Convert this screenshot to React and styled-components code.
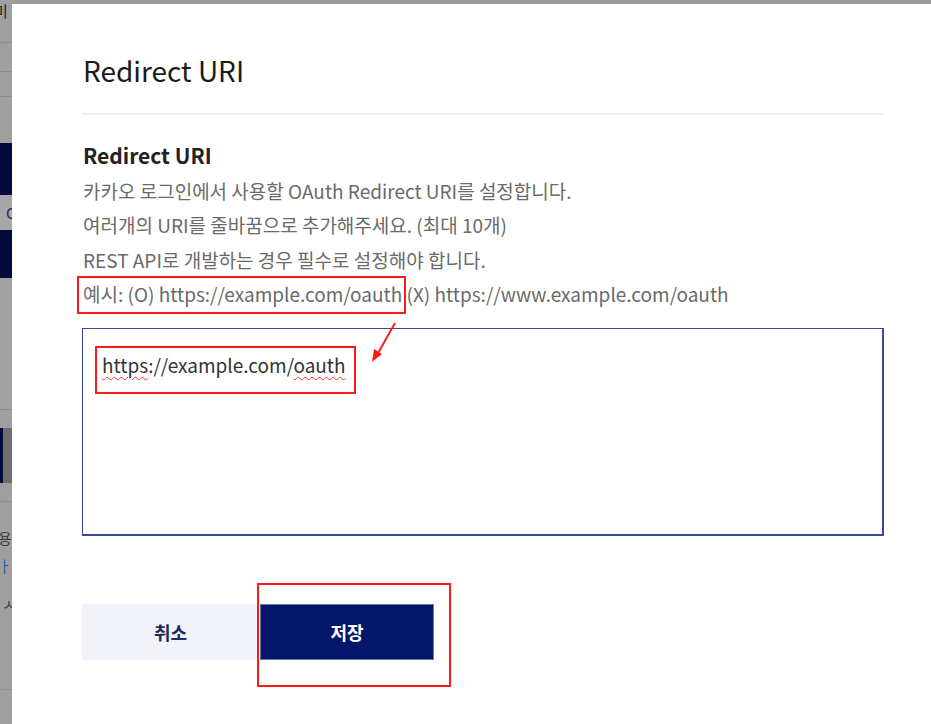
import React from 'react';
import styled, { createGlobalStyle } from 'styled-components';

const GlobalStyle = createGlobalStyle`
    html, body {
        margin: 0;
        padding: 0;
        overflow: hidden;
    }
    body {
        font-family: 'Noto Sans CJK KR', 'Noto Sans', sans-serif;
        background: #9d9d9d;
    }
    * {
        box-sizing: border-box;
    }
`;

const Screen = styled.div`
    display: grid;
    grid-template-columns: 12px 1fr;
    grid-template-rows: 4px 1fr;
    width: 100vw;
    height: 100vh;
    background: #9d9d9d;
`;

const PageEdge = styled.div`
    grid-row: 1 / 3;
    grid-column: 1;
    display: flex;
    flex-direction: column;
    overflow: hidden;
    background: #9f9f9f;
`;

const EdgeBlock = styled.div`
    height: ${(p) => p.h}px;
    flex-shrink: 0;
    background: ${(p) => p.bg || 'transparent'};
    border-bottom: ${(p) => (p.line ? '1px solid #8e8e8e' : 'none')};
    display: flex;
    align-items: center;
    font-size: 15px;
    color: ${(p) => p.ink || '#3a3a3a'};
    white-space: nowrap;
    line-height: 1;
`;

const SplitBlock = styled.div`
    height: ${(p) => p.h}px;
    flex-shrink: 0;
    display: grid;
    grid-template-columns: 3px 1fr;
    span:first-child {
        background: #030b3d;
    }
    span:last-child {
        background: #6c6c6c;
    }
`;

const TopEdge = styled.div`
    grid-row: 1;
    grid-column: 2;
    background: #9b9b9b;
`;

const Modal = styled.div`
    grid-row: 2;
    grid-column: 2;
    position: relative;
    background: #fff;
    padding: 47px 47px 0 70px;
    display: flex;
    flex-direction: column;
`;

const Title = styled.h2`
    margin: 0;
    font-size: 28px;
    font-weight: 400;
    line-height: 38px;
    color: #1b1b1b;
    padding-left: 1px;
`;

const Divider = styled.hr`
    margin: 24px 0 0;
    border: none;
    height: 2px;
    background: #efefef;
`;

const Section = styled.section`
    margin-top: 26px;
    display: flex;
    flex-direction: column;
`;

const SubTitle = styled.h3`
    margin: 0;
    font-size: 21px;
    font-weight: 700;
    line-height: 28px;
    color: #222;
    padding-left: 1px;
`;

const Description = styled.div`
    margin-top: 5px;
    font-size: 19px;
    line-height: 34.4px;
    color: #6a6a6a;
    padding-left: 1px;
    p {
        margin: 0;
        white-space: nowrap;
    }
`;

const Marked = styled.span`
    position: relative;
    display: inline-block;
    &::after {
        content: '';
        position: absolute;
        top: -1px;
        bottom: -2px;
        left: -6px;
        right: -4px;
        border: 2px solid #ff1a1a;
        pointer-events: none;
    }
`;

const UriBox = styled.div`
    margin-top: 16px;
    height: 208px;
    border: 1px solid #3a4896;
    border-right-width: 2px;
    border-bottom-width: 2px;
    padding: 22px 19px;
    font-size: 19px;
    line-height: 28px;
    color: #333;
`;

const UriLine = styled.span`
    position: relative;
    display: inline-block;
    &::after {
        content: '';
        position: absolute;
        top: -5px;
        bottom: -15px;
        left: -7px;
        right: -10px;
        border: 2px solid #ff1a1a;
        pointer-events: none;
    }
`;

const Misspelled = styled.span`
    text-decoration: underline wavy #ff3030;
    text-decoration-thickness: 1px;
    text-underline-offset: 3px;
`;

const Arrow = styled.svg`
    position: absolute;
    left: 354px;
    top: 316px;
    width: 40px;
    height: 42px;
    overflow: visible;
`;

const Actions = styled.div`
    margin-top: 68px;
    display: flex;
    gap: 1px;
`;

const Button = styled.button`
    position: relative;
    width: ${(p) => p.w}px;
    height: 56px;
    border: ${(p) => (p.primary ? '1px solid #6b76b4' : 'none')};
    background: ${(p) => (p.primary ? '#05166b' : '#f2f3f8')};
    color: ${(p) => (p.primary ? '#fff' : '#1e2b5c')};
    font-family: inherit;
    font-size: 18px;
    font-weight: 700;
    cursor: pointer;
    ${(p) =>
        p.marked &&
        `
        &::after {
            content: '';
            position: absolute;
            top: -22px;
            bottom: -28px;
            left: -4px;
            right: -18px;
            border: 2px solid #ff1a1a;
            pointer-events: none;
        }
    `}
`;

const App = () => {
    return (
        <>
            <GlobalStyle />
            <Screen>
                <PageEdge>
                    <EdgeBlock h={20} ink="#1a1a1a">
                        <span style={{ marginLeft: -6 }}>미</span>
                    </EdgeBlock>
                    <EdgeBlock h={23} line />
                    <EdgeBlock h={29} line />
                    <EdgeBlock h={25} line />
                    <EdgeBlock h={46} />
                    <EdgeBlock h={52} bg="#030b3d" />
                    <EdgeBlock h={35} bg="#a6a6a6" ink="#14206a">
                        <span style={{ marginLeft: 6 }}>C</span>
                    </EdgeBlock>
                    <EdgeBlock h={48} bg="#030b3d" />
                    <EdgeBlock h={132} bg="#a1a1a1" line />
                    <EdgeBlock h={18} />
                    <SplitBlock h={55}>
                        <span />
                        <span />
                    </SplitBlock>
                    <EdgeBlock h={19} line />
                    <EdgeBlock h={18} />
                    <EdgeBlock h={34} ink="#3c3c3c">
                        <span style={{ marginLeft: -2 }}>용</span>
                    </EdgeBlock>
                    <EdgeBlock h={22} ink="#3c3c3c">
                        <span style={{ marginLeft: -2 }}>
                            <span style={{ color: '#1d5fa8' }}>ㅏ</span>오
                        </span>
                    </EdgeBlock>
                    <EdgeBlock h={54} ink="#3c3c3c">
                        <span style={{ marginLeft: 2 }}>ㅅ</span>
                    </EdgeBlock>
                    <EdgeBlock h={60} line />
                </PageEdge>
                <TopEdge />
                <Modal>
                    <Title>Redirect URI</Title>
                    <Divider />
                    <Section>
                        <SubTitle>Redirect URI</SubTitle>
                        <Description>
                            <p>카카오 로그인에서 사용할 OAuth Redirect URI를 설정합니다.</p>
                            <p>여러개의 URI를 줄바꿈으로 추가해주세요. (최대 10개)</p>
                            <p>REST API로 개발하는 경우 필수로 설정해야 합니다.</p>
                            <p>
                                <Marked>예시: (O) https://example.com/oauth</Marked> (X)
                                https://www.example.com/oauth
                            </p>
                        </Description>
                        <UriBox>
                            <UriLine>
                                <Misspelled>https</Misspelled>://example.com/
                                <Misspelled>oauth</Misspelled>
                            </UriLine>
                        </UriBox>
                    </Section>
                    <Arrow viewBox="0 0 40 42">
                        <line x1="29" y1="3" x2="11" y2="35" stroke="#ff1a1a" strokeWidth="2" />
                        <polygon points="6,42 8,29 16,34" fill="#ff1a1a" />
                    </Arrow>
                    <Actions>
                        <Button w={177}>취소</Button>
                        <Button w={174} primary marked>
                            저장
                        </Button>
                    </Actions>
                </Modal>
            </Screen>
        </>
    );
};

export default App;
